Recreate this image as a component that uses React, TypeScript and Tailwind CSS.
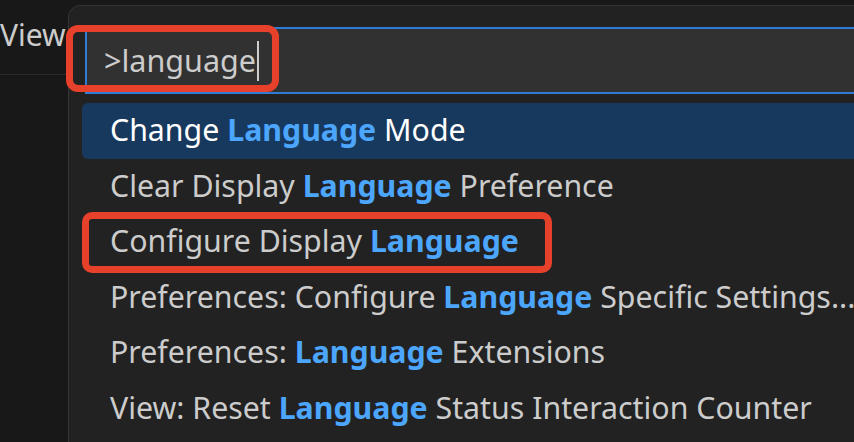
import React from "react";

// ── Data ───────────────────────────────────────────────────────────────────────

type Item = { before: string; match: string; after: string };

const ITEMS: Item[] = [
  { before: "Change ", match: "Language", after: " Mode" },
  { before: "Clear Display ", match: "Language", after: " Preference" },
  { before: "Configure Display ", match: "Language", after: "" },
  { before: "Preferences: Configure ", match: "Language", after: " Specific Settings..." },
  { before: "Preferences: ", match: "Language", after: " Extensions" },
  { before: "View: Reset ", match: "Language", after: " Status Interaction Counter" },
];

const FONT = { fontFamily: '"Noto Sans", "Open Sans", sans-serif' };

// ── Rows ───────────────────────────────────────────────────────────────────────

function Row({ item, active }: { item: Item; active: boolean }) {
  return (
    <div
      className={[
        "flex items-center h-[55.5px] pl-[28px] rounded-l-[6px] whitespace-nowrap text-[30.3px] leading-none",
        active ? "bg-[#18395e] text-white" : "text-[#cccccc]",
      ].join(" ")}
    >
      <span className="-mt-[1px]">
        {item.before}
        <b className="font-bold text-[#4ca6fc]">{item.match}</b>
        {item.after}
      </span>
    </div>
  );
}

// ── App ────────────────────────────────────────────────────────────────────────

export default function App() {
  return (
    <div className="relative w-[854px] h-[442px] overflow-hidden bg-[#181818]" style={FONT}>
      {/* Menu bar behind the picker */}
      <div className="h-[75px] border-b border-[#2b2b2b] flex items-center">
        <span className="text-[30px] leading-none text-[#cccccc] -mt-[4px]">View</span>
      </div>

      {/* Quick pick */}
      <div className="absolute left-[68px] top-[5px] -right-[20px] -bottom-[20px] rounded-tl-[12px] border border-[#353535] bg-[#222222]">
        <div className="pl-[16px] pt-[21px]">
          <div className="h-[67px] border-2 border-[#2f7bd6] border-r-0 bg-[#313131] flex items-center pl-[17px]">
            <span className="text-[30.5px] leading-none text-[#cccccc] -mt-[1px]">&gt;language</span>
            <span className="ml-[1px] w-[2px] h-[40px] bg-[#cccccc]" />
          </div>
        </div>
        <div className="pl-[13px] pt-[9px]">
          {ITEMS.map((item, i) => (
            <Row key={i} item={item} active={i === 0} />
          ))}
        </div>
      </div>

      {/* Annotation boxes */}
      <div className="absolute left-[66px] top-[25px] w-[213px] h-[67px] rounded-[12px] border-[7px] border-[#e8412b]" />
      <div className="absolute left-[82px] top-[212px] w-[470px] h-[61px] rounded-[10px] border-[7px] border-[#e8412b]" />
    </div>
  );
}
